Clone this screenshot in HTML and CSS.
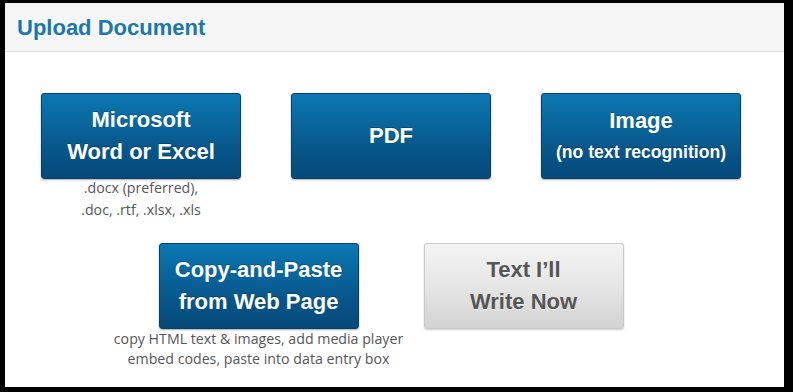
FILE: index.html
```html
<!DOCTYPE html>
<html>
<head>
<meta charset="utf-8">
<link rel="stylesheet" href="styles.css">
</head>
<body>
<div class="panel">
  <div class="header"><h1 class="title">Upload Document</h1></div>
  <div class="content">
    <div class="row row-top">
      <div class="item">
        <div class="btn btn-blue"><span class="line">Microsoft</span><span class="line">Word or Excel</span></div>
        <div class="caption">.docx (preferred),<br>.doc, .rtf, .xlsx, .xls</div>
      </div>
      <div class="item">
        <div class="btn btn-blue"><span class="line">PDF</span></div>
      </div>
      <div class="item">
        <div class="btn btn-blue"><span class="line">Image</span><span class="line small">(no text recognition)</span></div>
      </div>
    </div>
    <div class="row row-bottom">
      <div class="item">
        <div class="btn btn-blue"><span class="line">Copy-and-Paste</span><span class="line">from Web Page</span></div>
        <div class="caption">copy HTML text &amp; images, add media player<br>embed codes, paste into data entry box</div>
      </div>
      <div class="item">
        <div class="btn btn-gray"><span class="line">Text I’ll</span><span class="line">Write Now</span></div>
      </div>
    </div>
  </div>
</div>
</body>
</html>
```
FILE: styles.css
```css
html, body {
  margin: 0;
  padding: 0;
  background: #000;
  width: 793px;
  height: 392px;
  overflow: hidden;
}
.panel {
  margin: 3px 9px 0 5px;
  width: 779px;
  height: 384px;
  background: #fff;
  display: flex;
  flex-direction: column;
}
.header {
  height: 48px;
  background: #f5f5f5;
  border-bottom: 1px solid #dcdcdc;
  display: flex;
  align-items: center;
  padding-left: 12px;
}
.title {
  margin: 2px 0 0 0;
  font-family: "Liberation Sans", Arial, sans-serif;
  font-weight: bold;
  font-size: 22px;
  color: #1a78aa;
}
.content {
  padding: 41px 7px 0 0;
  display: flex;
  flex-direction: column;
  gap: 22px;
}
.row {
  display: flex;
  justify-content: center;
}
.row-top { gap: 50px; }
.row-bottom { gap: 65px; }
.item {
  width: 200px;
  display: flex;
  flex-direction: column;
  align-items: center;
}
.btn {
  box-sizing: border-box;
  width: 200px;
  height: 86px;
  border-radius: 3px;
  display: flex;
  flex-direction: column;
  align-items: center;
  justify-content: center;
  font-family: "Liberation Sans", Arial, sans-serif;
  font-weight: bold;
  font-size: 22px;
  line-height: 32px;
}
.btn-blue {
  background: linear-gradient(#0b78b3, #075487 70%, #064a7b);
  border: 1px solid #0a3f63;
  color: #fff;
  text-shadow: 0 -1px 0 rgba(0,0,0,0.25);
  box-shadow: 0 1px 2px rgba(0,0,0,0.35);
}
.btn-gray {
  background: linear-gradient(#f4f4f4, #e2e2e2 60%, #d2d2d2);
  border: 1px solid #c9c9c9;
  color: #555;
  text-shadow: 0 1px 0 rgba(255,255,255,0.6);
  box-shadow: 0 1px 2px rgba(0,0,0,0.2);
}
.line { display: block; white-space: nowrap; }
.small { font-size: 17.6px; line-height: 30px; }
.caption {
  margin-top: -2px;
  font-family: "Open Sans", sans-serif;
  font-size: 14.2px;
  line-height: 22px;
  color: #555;
  text-align: center;
  white-space: nowrap;
}
.row-bottom .caption { line-height: 20px; margin-top: 0; }
```
